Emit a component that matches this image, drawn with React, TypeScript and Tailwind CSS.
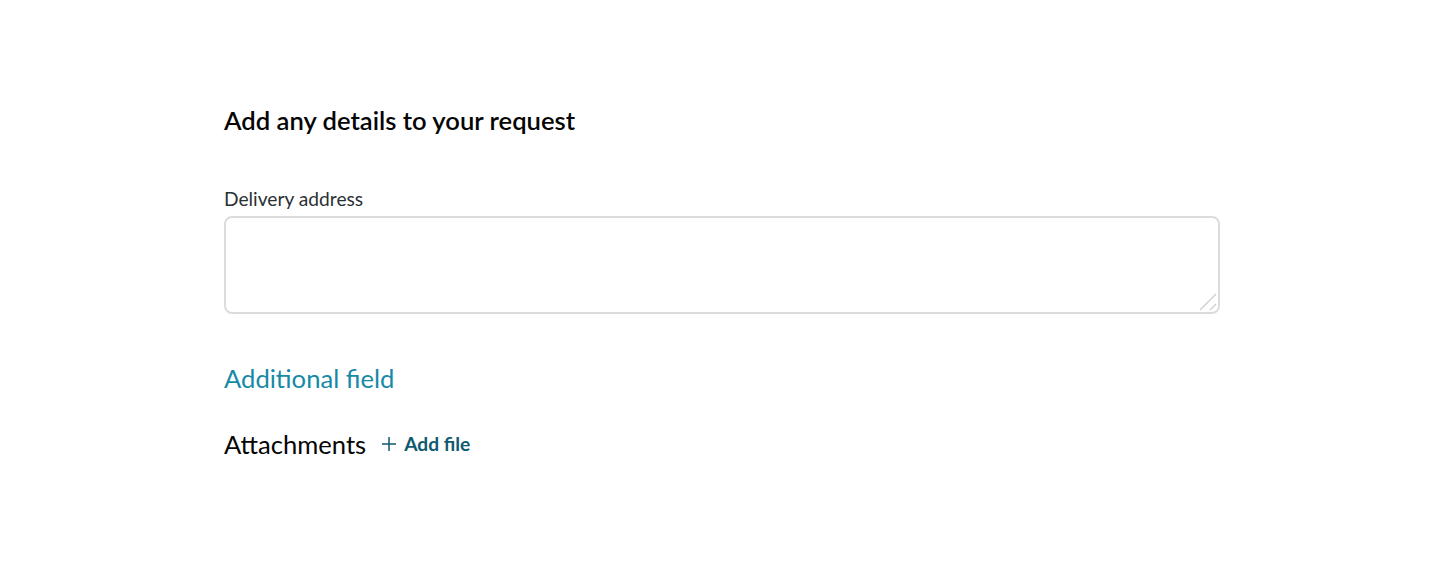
export default function App() {
  return (
    <div className="min-h-[570px] bg-white font-['Lato','Noto_Sans',sans-serif]">
      <div className="mx-auto w-[996px] pt-[104px]">
        {/* Heading */}
        <h2 className="text-[25.6px] font-semibold leading-8 text-[#050505]">
          Add any details to your request
        </h2>

        {/* Delivery address */}
        <label className="mt-[51px] block text-[19.2px] leading-6 text-[#2b3034]">
          Delivery address
        </label>
        <div className="relative mt-[5px]">
          <textarea className="block h-[98px] w-full resize-none rounded-lg border-2 border-[#dadcde] px-3 py-2 text-base outline-none" />
          {/* resize grip */}
          <svg
            className="pointer-events-none absolute bottom-[3px] right-[3px]"
            width="20"
            height="20"
            viewBox="0 0 20 20"
            fill="none"
            stroke="#c9cdd0"
            strokeWidth="1.2"
          >
            <path d="M3 19L19 3M13 19L19 13" />
          </svg>
        </div>

        {/* Additional field link */}
        <a href="#" className="mt-[48px] block text-[25.6px] leading-8 text-[#1689a6]">
          Additional field
        </a>

        {/* Attachments */}
        <div className="mt-[34px] flex items-center gap-[16px]">
          <span className="text-[25.6px] leading-8 text-[#050505]">Attachments</span>
          <button className="flex items-center gap-[8px] text-[19.2px] font-bold text-[#0f5a70]">
            <svg width="14" height="14" viewBox="0 0 14 14" fill="none" stroke="currentColor" strokeWidth="1.5">
              <path d="M7 0v14M0 7h14" />
            </svg>
            Add file
          </button>
        </div>
      </div>
    </div>
  );
}
